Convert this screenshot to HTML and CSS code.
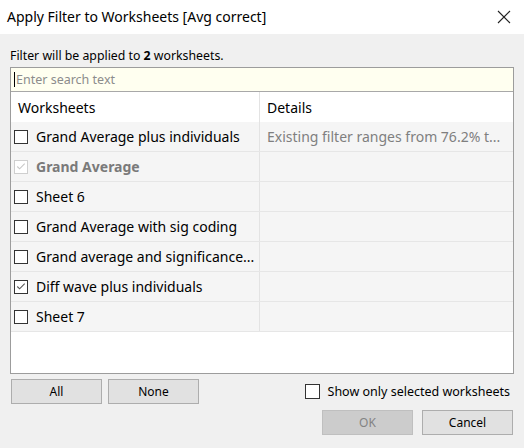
FILE: index.html
```html
<!DOCTYPE html>
<html>
<head>
<meta charset="utf-8">
<link rel="stylesheet" href="styles.css">
</head>
<body>
<div class="dialog">
  <div class="titlebar">
    <span class="title">Apply Filter to Worksheets [Avg correct]</span>
    <svg class="close" width="14" height="14" viewBox="0 0 14 14"><path d="M1 1 L13 13 M13 1 L1 13" stroke="#222" stroke-width="1.1" fill="none"/></svg>
  </div>
  <div class="content">
    <div class="info">Filter will be applied to <b>2</b> worksheets.</div>
    <div class="list">
      <div class="search"><span class="caret"></span><span class="placeholder">Enter search text</span></div>
      <div class="row header">
        <div class="cell">Worksheets</div>
        <div class="cell">Details</div>
      </div>
      <div class="row">
        <div class="cell"><span class="cb"></span>Grand Average plus individuals</div>
        <div class="cell detail">Existing filter ranges from 76.2% t...</div>
      </div>
      <div class="row">
        <div class="cell disabled"><span class="cb dis"><svg width="13" height="13" viewBox="0 0 13 13"><path d="M2.5 6.5 L5 9 L10.5 3.5" stroke="#c8c8c8" stroke-width="1.2" fill="none"/></svg></span>Grand Average</div>
        <div class="cell"></div>
      </div>
      <div class="row">
        <div class="cell"><span class="cb"></span>Sheet 6</div>
        <div class="cell"></div>
      </div>
      <div class="row">
        <div class="cell"><span class="cb"></span>Grand Average with sig coding</div>
        <div class="cell"></div>
      </div>
      <div class="row">
        <div class="cell"><span class="cb"></span>Grand average and significance...</div>
        <div class="cell"></div>
      </div>
      <div class="row">
        <div class="cell"><span class="cb"><svg width="13" height="13" viewBox="0 0 13 13"><path d="M2.5 6.5 L5 9 L10.5 3.5" stroke="#555" stroke-width="1.2" fill="none"/></svg></span>Diff wave plus individuals</div>
        <div class="cell"></div>
      </div>
      <div class="row">
        <div class="cell"><span class="cb"></span>Sheet 7</div>
        <div class="cell"></div>
      </div>
      <div class="filler"></div>
    </div>
    <div class="controls">
      <button class="btn">All</button>
      <button class="btn">None</button>
      <label class="showonly"><span class="cb"></span>Show only selected worksheets</label>
    </div>
    <div class="actions">
      <button class="btn ok">OK</button>
      <button class="btn">Cancel</button>
    </div>
  </div>
</div>
</body>
</html>
```

FILE: styles.css
```css
* { box-sizing: border-box; }
html, body {
  margin: 0;
  padding: 0;
  width: 524px;
  height: 448px;
  overflow: hidden;
  background: #f0f0f0;
  font-family: "Noto Sans", "Open Sans", sans-serif;
  color: #000;
}
.dialog {
  display: flex;
  flex-direction: column;
  height: 448px;
}
.titlebar {
  height: 34px;
  background: #fff;
  display: flex;
  align-items: center;
  justify-content: space-between;
  padding: 0 13px 0 7px;
}
.title {
  font-size: 14px;
  color: #000;
  padding-bottom: 2px;
}
.close { display: block; margin-top: -1px; }
.content {
  padding: 0 10px 0 10px;
  display: flex;
  flex-direction: column;
}
.info {
  height: 33px;
  font-size: 12.3px;
  padding-top: 14px;
  line-height: 16px;
  color: #000;
}
.info b { font-weight: 700; }
.list {
  border: 1px solid #9c9c9c;
  height: 307px;
  display: flex;
  flex-direction: column;
  background: #fff;
}
.search {
  height: 24px;
  background: #fffff0;
  border-bottom: 1px solid #a8a8a8;
  display: flex;
  align-items: center;
  padding-left: 3px;
  font-size: 12.5px;
  color: #8c8c8c;
}
.caret {
  width: 1px;
  height: 15px;
  background: #000;
  margin-right: 1px;
}
.row {
  display: grid;
  grid-template-columns: 249px 1fr;
  height: 30px;
  background: #f5f5f5;
  border-bottom: 1px solid #e6e6e6;
  font-size: 14px;
}
.row.header {
  background: #fff;
  border-bottom: none;
}
.cell {
  display: flex;
  align-items: center;
  padding-left: 3px;
  white-space: nowrap;
  overflow: hidden;
  border-right: 1px solid #e3e3e3;
}
.cell + .cell { border-right: none; padding-left: 7px; }
.header .cell:first-child { padding-left: 7px; }
.detail { color: #7f7f7f; }
.disabled { color: #7a7a7a; font-weight: 700; }
.cb {
  width: 14px;
  height: 14px;
  border: 1px solid #333;
  background: #fff;
  margin-right: 8px;
  flex: none;
  display: flex;
  align-items: center;
  justify-content: center;
}
.cb svg { display: block; }
.cb.dis { border-color: #cfcfcf; }
.filler { flex: 1; background: #fff; }
.controls {
  display: flex;
  align-items: center;
  margin-top: 5px;
  height: 25px;
}
.btn {
  width: 91px;
  height: 25px;
  border: 1px solid #adadad;
  background: #e1e1e1;
  font-family: inherit;
  font-size: 12px;
  color: #000;
  padding: 0;
  margin: 0;
}
.controls .btn:first-child { margin-left: 1px; margin-right: 6px; }
.showonly {
  margin-left: auto;
  display: flex;
  align-items: center;
  font-size: 12.5px;
  margin-right: 4px;
}
.showonly .cb { width: 15px; height: 15px; margin-right: 8px; }
.actions {
  display: flex;
  justify-content: flex-end;
  margin-top: 6px;
  margin-right: 1px;
  gap: 9px;
}
.btn.ok {
  background: #cccccc;
  border-color: #bfbfbf;
  color: #838383;
}
```
